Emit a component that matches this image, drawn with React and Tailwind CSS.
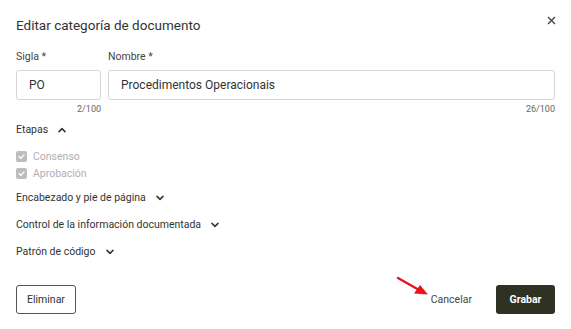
import React from "react";

const Chevron = ({ up }) => (
  <svg width="8" height="6" viewBox="0 0 8 6" className="ml-[10px]" fill="none">
    <path d={up ? "M1 4.6 L4 1.6 L7 4.6" : "M1 1.4 L4 4.4 L7 1.4"} stroke="#333" strokeWidth="1.5" strokeLinecap="round" strokeLinejoin="round" />
  </svg>
);

const Check = ({ label }) => (
  <div className="flex items-center h-[17px]">
    <span className="w-[11px] h-[11px] rounded-[2px] bg-[#bdbdbd] flex items-center justify-center">
      <svg width="9" height="9" viewBox="0 0 10 10" fill="none">
        <path d="M2.3 5.2 L4.2 7 L7.8 3.2" stroke="white" strokeWidth="1.5" strokeLinecap="round" strokeLinejoin="round" />
      </svg>
    </span>
    <span className="ml-[6px] text-[10.5px] leading-[14px] text-[#b0b0b0]">{label}</span>
  </div>
);

const Section = ({ label, up }) => (
  <div className="flex items-center text-[10.5px] leading-[14px] text-[#333]">
    {label}
    <Chevron up={up} />
  </div>
);

export default function App() {
  return (
    <div className="w-[571px] h-[329px] bg-white relative" style={{ fontFamily: "Roboto, sans-serif" }}>
      <div className="px-4 pt-[15px]">
        <div className="flex items-center justify-between h-[20px]">
          <h1 className="text-[13.5px] text-[#333] leading-[20px]">Editar categoría de documento</h1>
          <svg width="9" height="9" viewBox="0 0 9 9" className="mr-[-1px] mt-[-10px]">
            <path d="M1 1 L8 8 M8 1 L1 8" stroke="#444" strokeWidth="1.4" />
          </svg>
        </div>
        <div className="flex gap-[7px] mt-[15px]">
          <div className="w-[85px] flex flex-col">
            <label className="text-[10.5px] text-[#444] leading-[14px]">Sigla *</label>
            <div className="mt-[6px] h-[30px] border border-[#d6d6d6] rounded-[3px] flex items-center px-[12px] text-[12px] text-[#333]">PO</div>
            <div className="text-right text-[9px] text-[#666] mt-[3px] leading-[12px]">2/100</div>
          </div>
          <div className="flex-1 flex flex-col">
            <label className="text-[10.5px] text-[#444] leading-[14px]">Nombre *</label>
            <div className="mt-[6px] h-[30px] border border-[#d6d6d6] rounded-[3px] flex items-center px-[12px] text-[12px] text-[#333]">Procedimentos Operacionais</div>
            <div className="text-right text-[9px] text-[#666] mt-[3px] leading-[12px]">26/100</div>
          </div>
        </div>
        <div className="mt-[8px]">
          <Section label="Etapas" up />
          <div className="mt-[11px] flex flex-col">
            <Check label="Consenso" />
            <Check label="Aprobación" />
          </div>
          <div className="mt-[9px] flex flex-col gap-[13px]">
            <Section label="Encabezado y pie de página" />
            <Section label="Control de la información documentada" />
            <Section label="Patrón de código" />
          </div>
        </div>
        <div className="flex items-center justify-between mt-[26px]">
          <button className="h-[29px] px-[10px] border border-[#555] rounded-[3px] text-[10.5px] text-[#333]">Eliminar</button>
          <div className="flex items-center">
            <span className="text-[10.5px] text-[#444] mr-[24px]">Cancelar</span>
            <button className="h-[29px] w-[59px] bg-[#2f3122] rounded-[3px] text-[10.5px] font-bold text-white">Grabar</button>
          </div>
        </div>
      </div>
      <svg className="absolute left-[395px] top-[275px]" width="36" height="24" viewBox="0 0 36 24">
        <path d="M3 3 L25 15.5" stroke="#e8141a" strokeWidth="2.4" strokeLinecap="round" />
        <path d="M33 19.5 L19 18.5 L25 10 Z" fill="#e8141a" />
      </svg>
    </div>
  );
}
